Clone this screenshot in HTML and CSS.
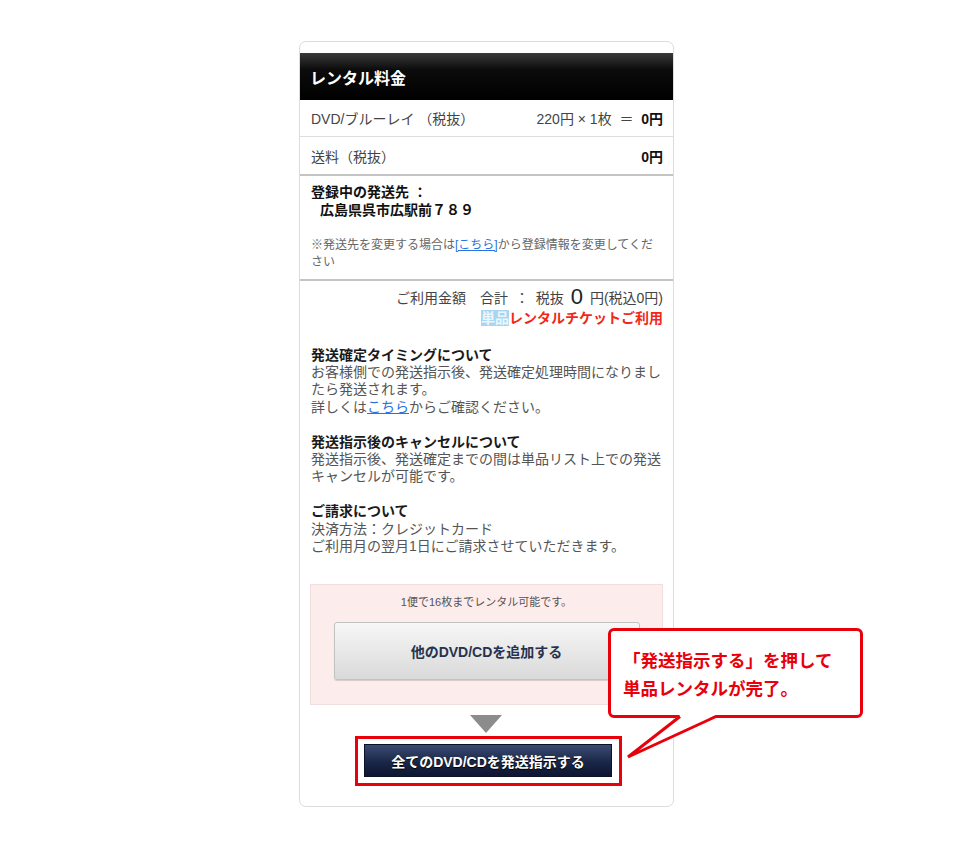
FILE: index.html
```html
<!DOCTYPE html>
<html lang="ja">
<head>
<meta charset="utf-8">
<title>レンタル料金</title>
<link rel="stylesheet" href="styles.css">
</head>
<body>
<div class="card">
  <div class="header">レンタル料金</div>
  <div class="row row-first">
    <span>DVD/ブルーレイ （税抜）</span>
    <span class="right">220円 × 1枚 &nbsp;＝ &nbsp;<b>0円</b></span>
  </div>
  <div class="row row-second">
    <span>送料（税抜）</span>
    <span class="right"><b>0円</b></span>
  </div>
  <div class="address">
    <div class="addr-title">登録中の発送先 ：</div>
    <div class="addr-value">広島県呉市広駅前７８９</div>
    <p class="note"><span>※発送先を変更する場合は</span><a class="link" href="#">[こちら]</a><span>から登録情報を変更してくだ</span><br><span>さい</span></p>
  </div>
  <div class="totals">
    <div class="total-line">ご利用金額　合計 ： 税抜 <span class="big">0</span> 円(税込0円)</div>
    <div class="ticket-line"><span class="tag">単品</span><span class="red">レンタルチケットご利用</span></div>
  </div>
  <div class="info">
    <div class="block">
      <div class="h">発送確定タイミングについて</div>
      <div>お客様側での発送指示後、発送確定処理時間になりましたら発送されます。</div>
      <div>詳しくは<a class="link" href="#">こちら</a>からご確認ください。</div>
    </div>
    <div class="block">
      <div class="h">発送指示後のキャンセルについて</div>
      <div>発送指示後、発送確定までの間は単品リスト上での発送キャンセルが可能です。</div>
    </div>
    <div class="block">
      <div class="h">ご請求について</div>
      <div>決済方法：クレジットカード</div>
      <div>ご利用月の翌月1日にご請求させていただきます。</div>
    </div>
  </div>
  <div class="pink">
    <div class="pink-note">1便で16枚までレンタル可能です。</div>
    <div class="btn-gray">他のDVD/CDを追加する</div>
  </div>
  <div class="arrow-wrap"><span class="arrow"></span></div>
  <div class="highlight-wrap">
    <div class="highlight">
      <div class="btn-navy">全てのDVD/CDを発送指示する</div>
    </div>
  </div>
</div>
<div class="callout">
  <div class="callout-text">「発送指示する」を押して<br>単品レンタルが完了。</div>
</div>
<svg class="tail" width="110" height="60" viewBox="0 0 110 60">
  <polygon points="60,2 96,2 8,44" fill="#fff"/>
  <polyline points="60,3.5 8,44 96,3.5" fill="none" stroke="#e8000b" stroke-width="3" stroke-linejoin="miter"/>
</svg>
</body>
</html>
```
FILE: styles.css
```css
* { box-sizing: border-box; }
html, body { margin: 0; padding: 0; background: #fff; }
body {
  font-family: "Liberation Sans", "Noto Sans CJK JP", sans-serif;
  color: #444;
  width: 960px;
  height: 848px;
  position: relative;
  overflow: hidden;
}
.card {
  margin: 41px 0 0 299px;
  width: 375px;
  height: 766px;
  border: 1px solid #dcdcdc;
  border-radius: 7px;
  padding-top: 11px;
  display: flex;
  flex-direction: column;
}
.header {
  height: 47px;
  background: linear-gradient(#3a3a3a 0%, #0c0c0c 35%, #000 100%);
  color: #fff;
  font-weight: bold;
  font-size: 16px;
  display: flex;
  align-items: center;
  padding-left: 10px;
  text-shadow: 0 0 1px #000;
}
.row {
  display: flex;
  justify-content: space-between;
  align-items: center;
  height: 37px;
  padding: 0 10px 0 11px;
  font-size: 14px;
  color: #444;
}
.row b { color: #111; font-size: 14px; }
.row-first { border-bottom: 1px solid #dedede; }
.row-second { height: 39px; border-bottom: 2px solid #c4c4c4; padding-top: 1px; }
.address {
  padding: 7px 10px 8px 11px;
  border-bottom: 2px solid #c4c4c4;
}
.addr-title, .addr-value {
  font-weight: bold;
  font-size: 14px;
  line-height: 18px;
  color: #111;
}
.addr-value { padding-left: 9px; }
.note {
  margin: 17.5px 0 0;
  font-size: 12px;
  line-height: 17px;
  color: #666;
  white-space: nowrap;
}
.link { color: #2a72e0; text-decoration: underline; }
.totals {
  padding: 6px 10px 0 11px;
  text-align: right;
  font-size: 14px;
}
.total-line { line-height: 20px; color: #444; word-spacing: 3px; }
.big { font-size: 22px; color: #222; vertical-align: -1px; }
.ticket-line { line-height: 20px; font-weight: bold; }
.tag { background: #a8d6f0; color: #eaf6fc; }
.red { color: #f0281a; }
.info {
  padding: 19px 10px 0 11px;
  font-size: 14px;
  line-height: 17.4px;
  color: #555;
}
.block + .block { margin-top: 17.4px; }
.h { font-weight: bold; color: #1a1a1a; }
.pink {
  margin: 29px 10px 0 10px;
  height: 121px;
  background: #fdecec;
  border: 1px solid #f1dede;
  display: flex;
  flex-direction: column;
  align-items: center;
}
.pink-note {
  font-size: 11px;
  color: #555;
  line-height: 16px;
  margin-top: 9px;
}
.btn-gray {
  margin-top: 12px;
  width: 306px;
  height: 58px;
  border: 1px solid #c2c2c2;
  border-radius: 3px;
  background: linear-gradient(#f7f7f7, #d9d9d9);
  display: flex;
  align-items: center;
  justify-content: center;
  font-weight: bold;
  font-size: 14px;
  color: #27324e;
  box-shadow: 0 1px 1px rgba(0,0,0,0.15);
}
.arrow-wrap {
  display: flex;
  justify-content: center;
  margin-top: 10px;
  padding-right: 2px;
}
.arrow {
  width: 0;
  height: 0;
  border-left: 16px solid transparent;
  border-right: 16px solid transparent;
  border-top: 18px solid #8c8c8c;
}
.highlight-wrap {
  display: flex;
  margin-top: 3px;
  padding-left: 55px;
}
.highlight {
  width: 267px;
  height: 50px;
  border: 3px solid #e8000b;
  padding: 5px 7px 6px 6px;
}
.btn-navy {
  width: 100%;
  height: 100%;
  background: linear-gradient(#3b4b70, #1a2748 55%, #0d1632);
  border: 1px solid #0b1228;
  color: #fff;
  font-weight: bold;
  font-size: 14px;
  display: flex;
  align-items: center;
  justify-content: center;
  text-shadow: 0 1px 1px #000;
}
.callout {
  position: absolute;
  left: 608px;
  top: 628px;
  width: 255px;
  height: 90px;
  border: 3px solid #e8000b;
  border-radius: 6px;
  background: #fff;
  padding: 15px 0 0 12px;
}
.callout-text {
  color: #e8000b;
  font-weight: bold;
  font-size: 17.5px;
  line-height: 28px;
  font-family: "Noto Sans CJK JP", sans-serif;
}
.tail {
  position: absolute;
  left: 620px;
  top: 713px;
}
```
